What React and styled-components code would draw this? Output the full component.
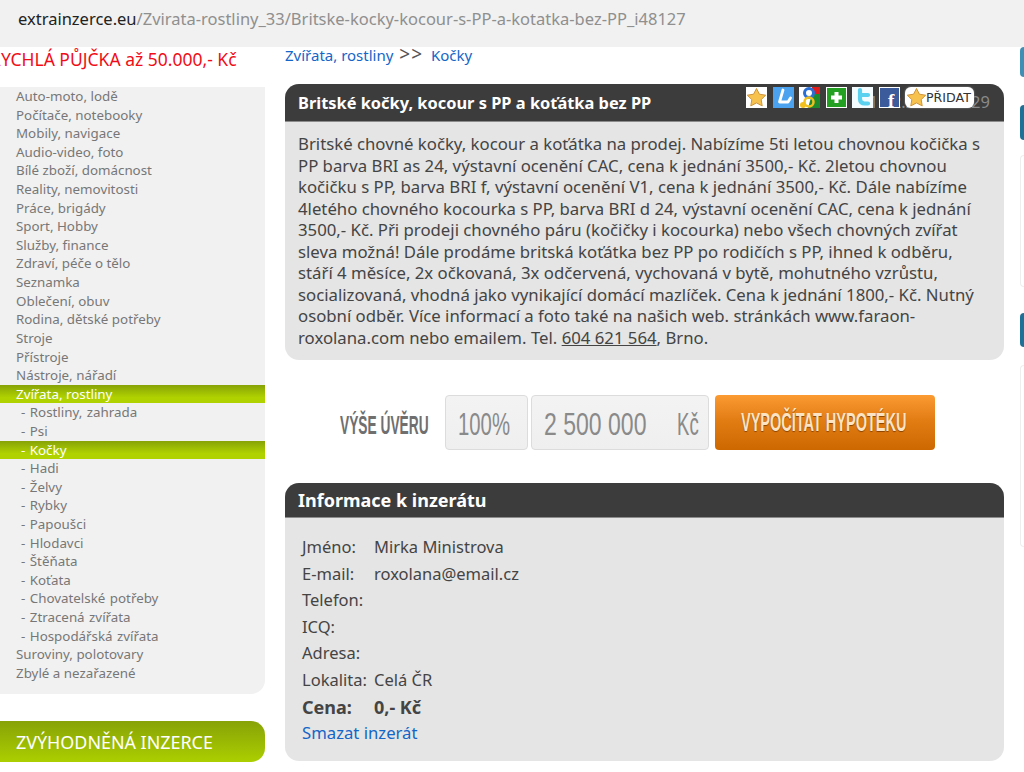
import React from "react";
import styled, { createGlobalStyle } from "styled-components";

const Global = createGlobalStyle`
  html, body { margin: 0; padding: 0; background: #fff; overflow: hidden; }
  body { font-family: "Noto Sans", "DejaVu Sans", sans-serif; }
`;
const Page = styled.div`width: 1024px; height: 772px; overflow: hidden; display: flex; flex-direction: column;`;
const AddressBar = styled.div`
  height: 47px; flex: none; background: #f1f1f1; padding: 9px 0 0 18px; box-sizing: border-box;
  font-size: 16.5px; line-height: 20px; color: #8f8f8f; white-space: nowrap;
  b { font-weight: 400; color: #222; }
`;
const Columns = styled.div`display: flex; flex: 1; min-height: 0;`;
const Left = styled.aside`width: 265px; flex: none; display: flex; flex-direction: column;`;
const Ad = styled.a`
  display: block; height: 40px; margin-left: -10px; padding-top: 2px; box-sizing: border-box;
  color: #f00d18; font-size: 17.5px; line-height: 20px; white-space: nowrap;
`;
const Menu = styled.ul`
  list-style: none; margin: 0; padding: 0 0 11px; background: #f1f1f1; border-bottom-right-radius: 14px;
`;
const Item = styled.li`
  height: 18.61px; line-height: 19.6px; font-size: 13.35px; white-space: nowrap; color: ${p => p.$on ? "#fff" : "#777"};
  padding-left: ${p => p.$sub ? 21 : 16}px; word-spacing: ${p => p.$sub ? 1 : 0}px;
  background: ${p => p.$on ? "linear-gradient(#87a207, #b0d300 70%)" : "none"};
`;
const Promo = styled.div`
  margin-top: 27px; height: 41px; border-radius: 0 14px 14px 0; padding-left: 16px; line-height: 42px;
  background: linear-gradient(#87a207, #abcf00); color: #fff; font-size: 17.9px; white-space: nowrap;
  box-sizing: border-box;
`;
const Main = styled.main`width: 719px; margin-left: 20px; flex: none; display: flex; flex-direction: column;`;
const Crumbs = styled.div`
  height: 37px; font-size: 15px; line-height: 17px; color: #555; box-sizing: border-box; white-space: nowrap;
  a { color: #1466c8; }
  i { font-style: normal; font-size: 19px; line-height: 0; letter-spacing: 1px; margin: 0 4px 0 2px; }
`;
const Panel = styled.section`background: #e5e5e5; border-radius: 14px; position: relative;`;
const PanelHead = styled.h2`
  margin: 0; height: ${p => p.$h}px; line-height: ${p => p.$h - 1}px; background: #3c3c3c; border-radius: 14px 14px 0 0;
  padding-left: 13px; color: #fff; font-size: ${p => p.$fs}px; font-weight: 700; border-bottom: 1px solid #8c8c8c; box-sizing: border-box;
`;
const Stamp = styled.span`position: absolute; top: 8px; right: 14px; color: #8a8a8a; font-size: 16.5px; line-height: 20px;`;
const Share = styled.div`position: absolute; top: 3px; left: 461px; display: flex; gap: 5.5px; align-items: flex-start;`;
const ShareIcon = styled.svg`width: 21px; height: 21px; display: block; flex: none;`;
const AddBtn = styled.div`
  width: 69px; height: 21px; background: #fff; border-radius: 6px; box-shadow: 0 0 2px #999;
  display: flex; align-items: center; color: #333; font-size: 12.6px; padding-left: 1px; box-sizing: border-box; font-family: "DejaVu Sans", sans-serif;
  overflow: hidden; white-space: nowrap;
`;
const AddLabel = styled.span`margin-left: -1px;`;
const Text = styled.p`
  margin: 0; padding: 11px 13px 11.5px; font-size: 16.75px; line-height: 21.55px; color: #444;
  u { text-decoration: underline; }
`;
const Calc = styled.div`
  height: 123px; display: flex; align-items: flex-start; padding: 35px 0 0 55px; box-sizing: border-box;
`;
const Narrow = styled.span`
  display: inline-block; transform: scaleX(${p => p.$sx}); transform-origin: left; white-space: nowrap;
`;
const CalcLabel = styled.div`
  width: 105px; flex: none; height: 55px; color: #6f6f6f; font: 700 25px/60px "Liberation Sans", sans-serif; white-space: nowrap; overflow: hidden;
`;
const Field = styled.div`
  width: ${p => p.$w}px; height: 55px; flex: none; margin-right: 3px; border: 1px solid #dcdcdc; border-radius: 4px; box-sizing: border-box;
  background: linear-gradient(#f3f3f3, #efefef); display: flex; justify-content: space-between; padding: 0 9px 0 12px; overflow: hidden;
  font: 400 32px/56px "Liberation Sans", sans-serif; color: #8a8a8a; white-space: nowrap;
`;
const Unit = styled.span`width: 22px; flex: none;`;
const Amount = styled.span`width: 110px; flex: none;`;
const CalcButton = styled.div`
  width: 220px; height: 55px; flex: none; margin-left: 3px; border-radius: 4px; padding-left: 26px; box-sizing: border-box; overflow: hidden;
  background: linear-gradient(#fb9b32, #e27d14 45%, #cd6700); color: #fbe3c4; text-shadow: 0 1px 1px #8a4500;
  font: 700 25px/55px "Liberation Sans", sans-serif; white-space: nowrap;
`;
const InfoBody = styled.div`padding: 16px 17px 0; height: 243px; box-sizing: border-box;`;
const Row = styled.div`
  display: grid; grid-template-columns: 72px 1fr; height: 26.6px; line-height: 26.6px; font-size: ${p => p.$b ? 18 : 16.5}px; color: #444; white-space: nowrap;
  font-weight: ${p => p.$b ? 700 : 400};
`;
const Link = styled.a`display: block; height: 26.6px; line-height: 26.6px; font-size: 16.7px; color: #1466c8;`;
const Right = styled.aside`width: 4px; margin-left: 16px; flex: none; display: flex; flex-direction: column;`;
const BlueTab = styled.div`
  height: ${p => p.$h}px; margin-top: ${p => p.$t}px; flex: none; border-radius: 14px 0 0 14px; background: ${p => p.$c};
`;
const GrayBox = styled.div`
  height: ${p => p.$h}px; margin-top: ${p => p.$t}px; flex: none; border: 1px solid #eee; border-right: 0; border-radius: 10px 0 0 10px; box-sizing: border-box;
`;

const items = [
  ["Auto-moto, lodě"],["Počítače, notebooky"],["Mobily, navigace"],["Audio-video, foto"],["Bílé zboží, domácnost"],["Reality, nemovitosti"],["Práce, brigády"],["Sport, Hobby"],["Služby, finance"],["Zdraví, péče o tělo"],["Seznamka"],["Oblečení, obuv"],["Rodina, dětské potřeby"],["Stroje"],["Přístroje"],["Nástroje, nářadí"],
  ["Zvířata, rostliny",0,1],["- Rostliny, zahrada",1],["- Psi",1],["- Kočky",1,1],["- Hadi",1],["- Želvy",1],["- Rybky",1],["- Papoušci",1],["- Hlodavci",1],["- Štěňata",1],["- Koťata",1],["- Chovatelské potřeby",1],["- Ztracená zvířata",1],["- Hospodářská zvířata",1],
  ["Suroviny, polotovary"],["Zbylé a nezařazené"],
];
const Star = () => (
  <path d="M10.5 1.5l2.9 5.7 6.3 1-4.5 4.4 1 6.3-5.7-3-5.7 3 1-6.3-4.5-4.4 6.3-1z" fill="#f7c24e" stroke="#d0953a" strokeWidth="1" strokeLinejoin="round" />
);
const glyph = { fontFamily: "Liberation Serif, serif", fontWeight: 700 };

export default function App() {
  return (
    <Page>
      <Global />
      <AddressBar><b>extrainzerce.eu</b>/Zvirata-rostliny_33/Britske-kocky-kocour-s-PP-a-kotatka-bez-PP_i48127</AddressBar>
      <Columns>
        <Left>
          <Ad>RYCHLÁ PŮJČKA až 50.000,- Kč</Ad>
          <Menu>
            {items.map(([t, sub, on]) => <Item key={t} $sub={sub} $on={on}>{t}</Item>)}
          </Menu>
          <Promo>ZVÝHODNĚNÁ INZERCE</Promo>
        </Left>
        <Main>
          <Crumbs><a>Zvířata, rostliny</a> <i>&gt;&gt;</i> <a>Kočky</a></Crumbs>
          <Panel>
            <PanelHead $h={38} $fs={16.4}>Britské kočky, kocour s PP a koťátka bez PP</PanelHead>
            <Stamp>11.12.2012 14:29</Stamp>
            <Share>
              <ShareIcon viewBox="0 0 21 21"><rect width="21" height="21" fill="#fff" /><Star /></ShareIcon>
              <ShareIcon viewBox="0 0 21 21"><rect width="21" height="21" fill="#4ba3ef" /><path d="M10 3L6.5 15H15l2.5-4" fill="none" stroke="#fff" strokeWidth="2.8" strokeLinecap="round" strokeLinejoin="round" /></ShareIcon>
              <ShareIcon viewBox="0 0 21 21"><rect width="21" height="21" fill="#fff" /><path d="M13 0h8v7h-8z" fill="#e21b1b" /><path d="M13 7h8v14H9z" fill="#1e8a2e" /><circle cx="4" cy="18" r="3" fill="#f2c01e" /><circle cx="10" cy="6" r="4.5" fill="none" stroke="#2a6fd8" strokeWidth="3" /><circle cx="10" cy="15" r="4.5" fill="none" stroke="#f2c01e" strokeWidth="2.5" /><path d="M14 2v8" stroke="#2a6fd8" strokeWidth="2" /></ShareIcon>
              <ShareIcon viewBox="0 0 21 21"><rect width="21" height="21" fill="#fff" /><rect x="1" y="1" width="19" height="19" fill="#23a021" /><path d="M8.5 5h4v3.5H16v4h-3.5V16h-4v-3.5H5v-4h3.5z" fill="#fff" /></ShareIcon>
              <ShareIcon viewBox="0 0 21 21"><rect width="21" height="21" fill="#f4fcff" /><path d="M8 3v9c0 3 2 4.5 4.5 4.5H16M8 8h8" fill="none" stroke="#5bd0ef" strokeWidth="4.2" strokeLinecap="round" strokeLinejoin="round" /></ShareIcon>
              <ShareIcon viewBox="0 0 21 21"><rect width="21" height="21" fill="#fff" /><rect x="1" y="1" width="19" height="19" fill="#3b5b9a" /><text x="9" y="19.5" fontSize="19" fill="#fff" style={glyph}>f</text></ShareIcon>
              <AddBtn><ShareIcon viewBox="0 0 21 21"><Star /></ShareIcon><AddLabel>PŘIDAT</AddLabel></AddBtn>
            </Share>
            <Text>
              Britské chovné kočky, kocour a koťátka na prodej. Nabízíme 5ti letou chovnou kočička s PP barva BRI as 24, výstavní ocenění CAC, cena k jednání 3500,- Kč. 2letou chovnou kočičku s PP, barva BRI f, výstavní ocenění V1, cena k jednání 3500,- Kč. Dále nabízíme 4letého chovného kocourka s PP, barva BRI d 24, výstavní ocenění CAC, cena k jednání 3500,- Kč. Při prodeji chovného páru (kočičky i kocourka) nebo všech chovných zvířat sleva možná! Dále prodáme britská koťátka bez PP po rodičích s PP, ihned k odběru, stáří 4 měsíce, 2x očkovaná, 3x odčervená, vychovaná v bytě, mohutného vzrůstu, socializovaná, vhodná jako vynikající domácí mazlíček. Cena k jednání 1800,- Kč. Nutný osobní odběr. Více informací a foto také na našich web. stránkách www.faraon-roxolana.com nebo emailem. Tel. <u>604 621 564</u>, Brno.
            </Text>
          </Panel>
          <Calc>
            <CalcLabel><Narrow $sx={.55}>VÝŠE ÚVĚRU</Narrow></CalcLabel>
            <Field $w={83}><Narrow $sx={.635}>100%</Narrow></Field>
            <Field $w={178}><Amount><Narrow $sx={.72}>2 500 000</Narrow></Amount><Unit><Narrow $sx={.58}>Kč</Narrow></Unit></Field>
            <CalcButton><Narrow $sx={.58}>VYPOČÍTAT HYPOTÉKU</Narrow></CalcButton>
          </Calc>
          <Panel>
            <PanelHead $h={35} $fs={18}>Informace k inzerátu</PanelHead>
            <InfoBody>
              <Row><span>Jméno:</span><span>Mirka Ministrova</span></Row>
              <Row><span>E-mail:</span><span>roxolana@email.cz</span></Row>
              <Row><span>Telefon:</span></Row>
              <Row><span>ICQ:</span></Row>
              <Row><span>Adresa:</span></Row>
              <Row><span>Lokalita:</span><span>Celá ČR</span></Row>
              <Row $b><span>Cena:</span><span>0,- Kč</span></Row>
              <Link>Smazat inzerát</Link>
            </InfoBody>
          </Panel>
        </Main>
        <Right>
          <BlueTab $h={30} $t={0} $c="#3f8fb5" />
          <BlueTab $h={35} $t={28} $c="#1e7196" />
          <GrayBox $h={132} $t={15} />
          <BlueTab $h={34} $t={26} $c="#1e7196" />
          <GrayBox $h={182} $t={18} />
        </Right>
      </Columns>
    </Page>
  );
}
